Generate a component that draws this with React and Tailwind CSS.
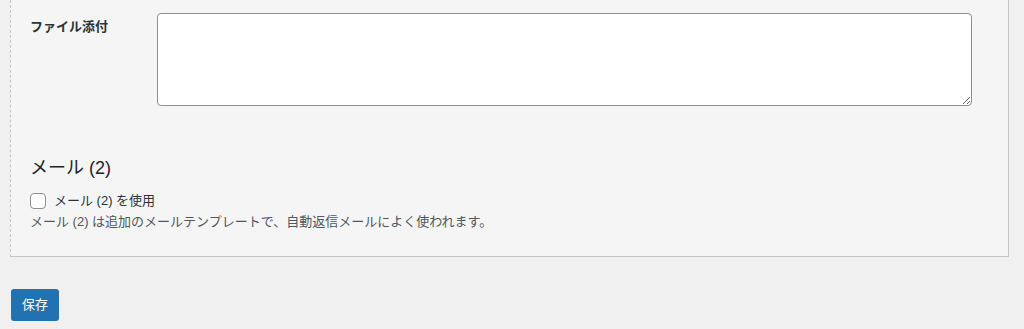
import { useState } from "react";

const font = {
  fontFamily: '"Liberation Sans", "Noto Sans CJK JP", sans-serif',
};

const App = () => {
  const [useMail2, setUseMail2] = useState(false);

  return (
    <div
      className="min-h-[329px] w-[1024px] bg-[#f0f0f1] text-[13px] text-[#1d2327]"
      style={font}
    >
      {/* Mail panel */}
      <div className="ml-[10px] w-[999px] border-l border-r border-b border-[#c3c4c7] bg-[#f5f5f5] px-[19px] pt-[13px] pb-[24px] [border-left-style:dashed]">
        <div className="flex">
          <label className="w-[127px] pt-[4px] font-bold leading-[20px] text-[#2c3338]">
            ファイル添付
          </label>
          <textarea className="block h-[93px] w-[815px] rounded-[4px] border border-[#8c8f94] bg-white px-2 py-1 outline-none" />
        </div>

        <h2 className="mt-[50px] text-[18px] leading-[24px] font-normal">
          メール (2)
        </h2>

        <label className="mt-[13px] flex h-[16px] items-center gap-[8px] leading-[16px] text-[#2c3338]">
          <input
            type="checkbox"
            checked={useMail2}
            onChange={(e) => setUseMail2(e.target.checked)}
            className="m-0 h-[16px] w-[16px] appearance-none rounded-[4px] border border-[#8c8f94] bg-white"
          />
          メール (2) を使用
        </label>
        <p className="mt-[3px] leading-[20px] text-[#50575e]">
          メール (2) は追加のメールテンプレートで、自動返信メールによく使われます。
        </p>
      </div>

      <button className="mt-[32px] ml-[11px] h-[32px] w-[48px] rounded-[3px] bg-[#2271b1] text-[13px] leading-[30px] text-white">
        保存
      </button>
    </div>
  );
};

export default App;
